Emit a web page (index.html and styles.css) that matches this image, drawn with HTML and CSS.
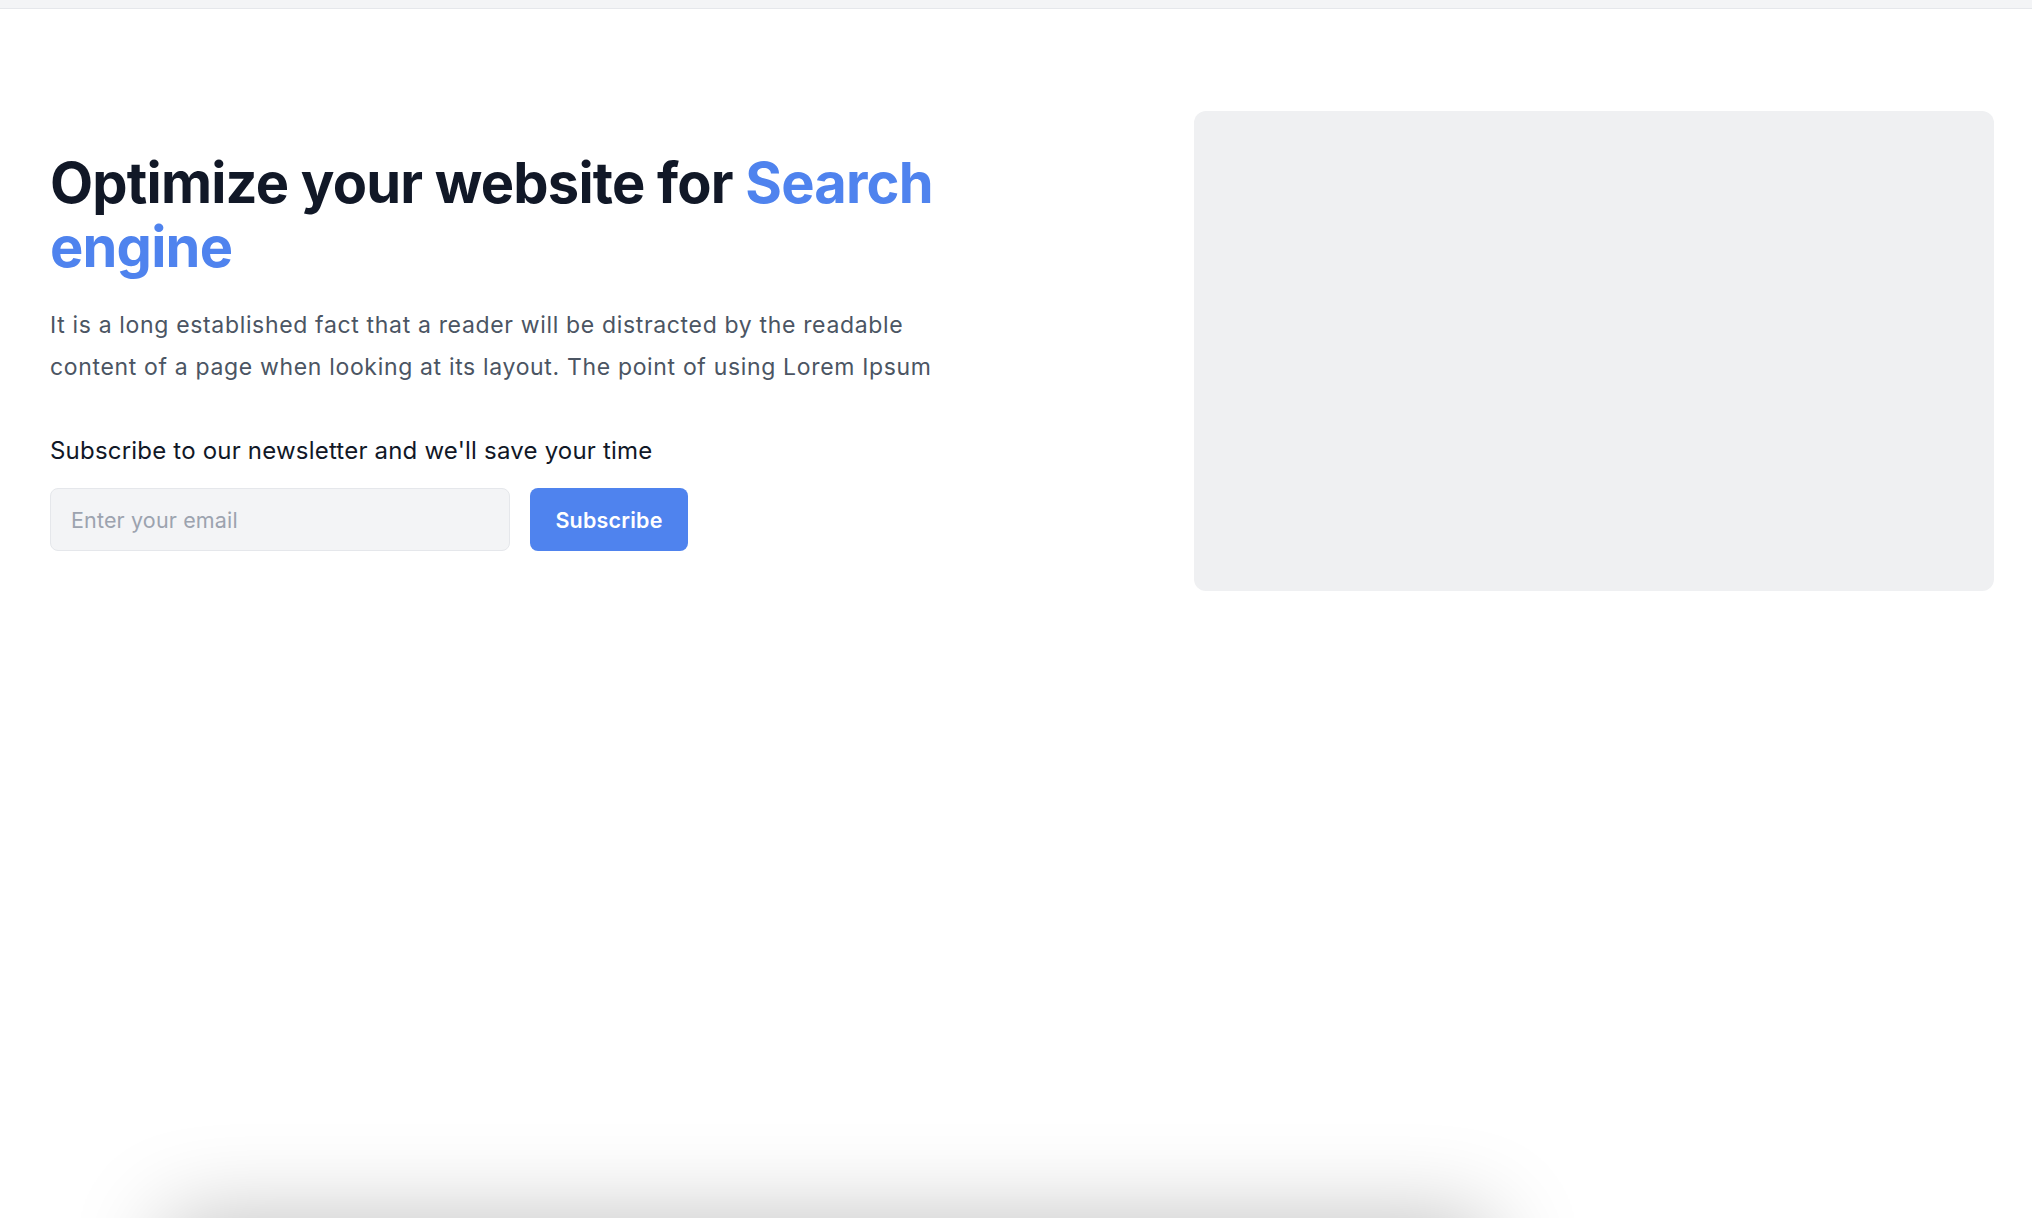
FILE: index.html
```html
<!DOCTYPE html>
<html lang="en">
<head>
<meta charset="utf-8">
<title>Optimize your website</title>
<link rel="stylesheet" href="styles.css">
</head>
<body>
<div class="topbar"></div>
<section class="hero">
  <div class="hero-row">
    <div class="hero-text">
      <h1 class="title">Optimize your website for <span class="accent">Search engine</span></h1>
      <p class="lead">It is a long established fact that a reader will be distracted by the readable content of a page when looking at its layout. The point of using Lorem Ipsum</p>
      <p class="sub-label">Subscribe to our newsletter and we'll save your time</p>
      <form class="sub-form">
        <input class="email" type="email" placeholder="Enter your email">
        <button class="btn" type="button">Subscribe</button>
      </form>
    </div>
    <div class="hero-media"></div>
  </div>
</section>
<section class="next">
  <div class="next-card"></div>
</section>
</body>
</html>
```
FILE: styles.css
```css
* { box-sizing: border-box; }
html, body { margin: 0; padding: 0; }
body {
  font-family: Inter, "Noto Sans", "Liberation Sans", sans-serif;
  background: #ffffff;
  color: #111827;
}
.topbar {
  height: 9px;
  background: #f3f4f6;
  border-bottom: 1px solid #e5e7eb;
}
.hero {
  height: 1209px;
  padding: 102px 38px 0 50px;
}
.hero-row {
  display: flex;
  align-items: center;
  justify-content: space-between;
}
.hero-text {
  width: 960px;
}
.title {
  margin: 0;
  font-size: 56px;
  line-height: 64px;
  font-weight: 700;
  letter-spacing: -0.8px;
  color: #111827;
}
.accent { color: #4f83ee; }
.lead {
  max-width: 915px;
  margin: 25px 0 0;
  font-size: 23px;
  line-height: 42px;
  letter-spacing: 0.66px;
  color: #4b5563;
}
.sub-label {
  margin: 47px 0 0;
  font-size: 24px;
  line-height: 32px;
  letter-spacing: 0.2px;
  color: #111827;
}
.sub-form {
  display: flex;
  gap: 20px;
  margin-top: 21px;
}
.email {
  width: 460px;
  height: 63px;
  padding: 0 20px;
  background: #f3f4f6;
  border: 1px solid #e5e7eb;
  border-radius: 8px;
  font-family: inherit;
  font-size: 21.5px;
  letter-spacing: 0.15px;
  color: #111827;
}
.email::placeholder { color: #9ca3af; }
.btn {
  width: 158px;
  height: 63px;
  background: #4f83ee;
  color: #ffffff;
  border: 0;
  border-radius: 8px;
  font-family: inherit;
  font-size: 21.5px;
  font-weight: 600;
  letter-spacing: 0.2px;
}
.hero-media {
  width: 800px;
  height: 480px;
  background: #eff0f2;
  border-radius: 12px;
}
.next {
  padding: 0 0 200px 165px;
}
.next-card {
  width: 1325px;
  height: 400px;
  background: #ffffff;
  border-radius: 16px;
  box-shadow: 0 0 90px rgba(0, 0, 0, 0.25);
}
```
